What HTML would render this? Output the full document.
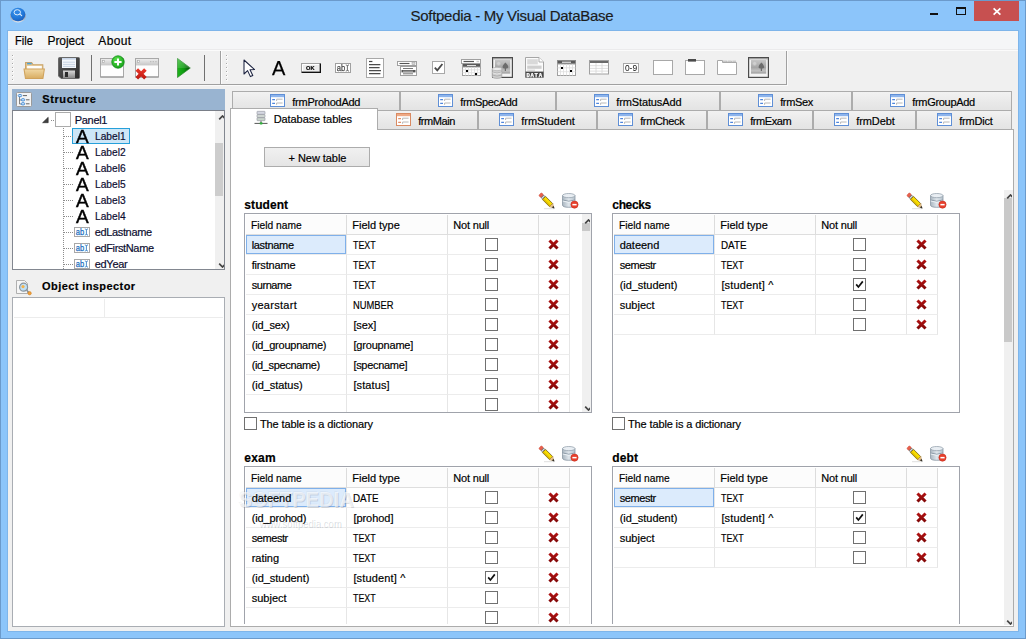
<!DOCTYPE html>
<html lang="en">
<head>
<meta charset="utf-8">
<title>Softpedia - My Visual DataBase</title>
<style>
html,body{margin:0;padding:0}
body{width:1026px;height:639px;overflow:hidden;position:relative;background:#8cc5fa;font-family:"Liberation Sans",sans-serif;font-size:11px;color:#000}
div,svg,span.t{position:absolute;box-sizing:border-box}
span.t{white-space:pre;display:block;z-index:1;-webkit-text-stroke:0.18px currentColor}
svg{overflow:visible}
.tab{border:1px solid #acacac;border-bottom:none;background:linear-gradient(#f2f2f2,#e8e8e8 60%,#e3e3e3)}
.panel{background:#fff;border:1px solid #a0a3ab}
.cell{border-right:1px solid #e6e6e6;border-bottom:1px solid #ececec}
.cb{width:13px;height:13px;background:#fff;border:1px solid #707070}

</style>
</head>
<body>
<div style="left:0px;top:0px;width:1026px;height:639px;border:1px solid #6b9acb;"></div>
<svg style="left:10px;top:7px" width="16" height="16" viewBox="0 0 16 16"><defs><radialGradient id="ga" cx="0.4" cy="0.3" r="0.85"><stop offset="0" stop-color="#3d98ee"/><stop offset="0.6" stop-color="#1f74d6"/><stop offset="1" stop-color="#1a4fa8"/></radialGradient>
<linearGradient id="gar" x1="0" y1="0" x2="0" y2="1"><stop offset="0" stop-color="#7f8ea6"/><stop offset="0.75" stop-color="#a8b2c0"/><stop offset="1" stop-color="#e6eaf0"/></linearGradient></defs>
<ellipse cx="8" cy="9" rx="7.9" ry="6.5" fill="url(#gar)"/>
<ellipse cx="8" cy="7.5" rx="7.3" ry="6.7" fill="url(#ga)"/>
<ellipse cx="7.3" cy="5.3" rx="3.2" ry="2.6" fill="#2f86e4" stroke="#e6f0fc" stroke-width="0.95"/><path d="M9.9 7.1 L11.7 8.7" stroke="#e6f0fc" stroke-width="1.1" stroke-linecap="round"/></svg>
<span class="t" style="left:410.5px;top:8px;font-size:15px;line-height:15px;height:15px;letter-spacing:-0.29px;color:#1c1c1c;">Softpedia - My Visual DataBase</span>
<div style="left:930px;top:13px;width:8px;height:2px;background:#111"></div>
<div style="left:956px;top:7px;width:10px;height:8px;border:1px solid #111;border-top-width:2px"></div>
<div style="left:974px;top:1px;width:45px;height:20px;background:#c75050"></div>
<svg style="left:993px;top:8px" width="8" height="7" viewBox="0 0 8 7"><path d="M0.6 0.3 L7.4 6.7 M7.4 0.3 L0.6 6.7" stroke="#fff" stroke-width="1.7"/></svg>
<div style="left:7px;top:30px;width:1012px;height:602px;background:#7eb5ea"></div>
<div style="left:8px;top:31px;width:1010px;height:600px;background:#f0f0f0"></div>
<div style="left:8px;top:31px;width:1010px;height:19px;background:#f5f6f7"></div>
<div style="left:8px;top:49px;width:1010px;height:1px;background:#ebebec"></div>
<div style="left:8px;top:50px;width:1010px;height:1px;background:#fbfbfb"></div>
<span class="t" style="left:15.3px;top:35px;font-size:12px;line-height:12px;height:12px;transform:scaleX(0.920);transform-origin:0 0;">File</span>
<span class="t" style="left:47.6px;top:35px;font-size:12px;line-height:12px;height:12px;letter-spacing:-0.13px;">Project</span>
<span class="t" style="left:98.3px;top:35px;font-size:12px;line-height:12px;height:12px;letter-spacing:0.34px;">About</span>
<div style="left:8px;top:84px;width:779px;height:1px;background:#a0a0a0"></div>
<div style="left:8px;top:85px;width:779px;height:1px;background:#fafafa"></div>
<div style="left:220px;top:51px;width:1px;height:33px;background:#a0a0a0"></div>
<div style="left:221px;top:51px;width:1px;height:33px;background:#fcfcfc"></div>
<div style="left:786px;top:51px;width:1px;height:34px;background:#a0a0a0"></div>
<div style="left:787px;top:51px;width:1px;height:35px;background:#fafafa"></div>
<div style="left:12px;top:55px;width:2px;height:2px;background:#fbfbfb"></div><div style="left:12px;top:55px;width:1px;height:1px;background:#a8a8a8"></div><div style="left:12px;top:59px;width:2px;height:2px;background:#fbfbfb"></div><div style="left:12px;top:59px;width:1px;height:1px;background:#a8a8a8"></div><div style="left:12px;top:63px;width:2px;height:2px;background:#fbfbfb"></div><div style="left:12px;top:63px;width:1px;height:1px;background:#a8a8a8"></div><div style="left:12px;top:67px;width:2px;height:2px;background:#fbfbfb"></div><div style="left:12px;top:67px;width:1px;height:1px;background:#a8a8a8"></div><div style="left:12px;top:71px;width:2px;height:2px;background:#fbfbfb"></div><div style="left:12px;top:71px;width:1px;height:1px;background:#a8a8a8"></div><div style="left:12px;top:75px;width:2px;height:2px;background:#fbfbfb"></div><div style="left:12px;top:75px;width:1px;height:1px;background:#a8a8a8"></div><div style="left:12px;top:79px;width:2px;height:2px;background:#fbfbfb"></div><div style="left:12px;top:79px;width:1px;height:1px;background:#a8a8a8"></div>
<div style="left:226px;top:55px;width:2px;height:2px;background:#fbfbfb"></div><div style="left:226px;top:55px;width:1px;height:1px;background:#a8a8a8"></div><div style="left:226px;top:59px;width:2px;height:2px;background:#fbfbfb"></div><div style="left:226px;top:59px;width:1px;height:1px;background:#a8a8a8"></div><div style="left:226px;top:63px;width:2px;height:2px;background:#fbfbfb"></div><div style="left:226px;top:63px;width:1px;height:1px;background:#a8a8a8"></div><div style="left:226px;top:67px;width:2px;height:2px;background:#fbfbfb"></div><div style="left:226px;top:67px;width:1px;height:1px;background:#a8a8a8"></div><div style="left:226px;top:71px;width:2px;height:2px;background:#fbfbfb"></div><div style="left:226px;top:71px;width:1px;height:1px;background:#a8a8a8"></div><div style="left:226px;top:75px;width:2px;height:2px;background:#fbfbfb"></div><div style="left:226px;top:75px;width:1px;height:1px;background:#a8a8a8"></div><div style="left:226px;top:79px;width:2px;height:2px;background:#fbfbfb"></div><div style="left:226px;top:79px;width:1px;height:1px;background:#a8a8a8"></div>
<svg style="left:22.8px;top:60.6px" width="22.4" height="19" viewBox="0 0 22 18" preserveAspectRatio="none"><defs><linearGradient id="gf" x1="0" y1="0" x2="0" y2="1"><stop offset="0" stop-color="#f1d9a6"/><stop offset="1" stop-color="#d9ad62"/></linearGradient></defs>
<path d="M2.5 3.5 L2.5 1.5 L8.5 1.5 L10 3.5 L19.5 3.5 L19.5 8 L2.5 8 Z" fill="#e6c489" stroke="#c9a46a" stroke-width="1"/>
<rect x="4" y="1.8" width="4.5" height="1.4" fill="#4aa0d8"/>
<rect x="4" y="4.6" width="14.5" height="3.2" fill="#fdfdfb"/>
<path d="M1 7.5 L21 7.5 L19.6 16.5 L2.4 16.5 Z" fill="url(#gf)" stroke="#cfa25c" stroke-width="1"/></svg>
<svg style="left:58px;top:57px" width="22" height="22" viewBox="0 0 22 22"><defs><linearGradient id="gfl" x1="0" y1="0" x2="1" y2="1"><stop offset="0" stop-color="#5b5b5b"/><stop offset="1" stop-color="#2b2b2b"/></linearGradient>
<linearGradient id="gfm" x1="0" y1="0" x2="0" y2="1"><stop offset="0" stop-color="#d8d8d8"/><stop offset="1" stop-color="#8a8a8a"/></linearGradient></defs>
<path d="M1.5 0.5 H20.5 Q21.5 0.5 21.5 1.5 V20.5 Q21.5 21.5 20.5 21.5 H3 L0.5 19 V1.5 Q0.5 0.5 1.5 0.5Z" fill="url(#gfl)" stroke="#6b6b6b" stroke-width="1"/>
<rect x="4" y="1" width="14" height="10" fill="#f4f7fb"/>
<rect x="4" y="1" width="14" height="1.6" fill="#c9d6e8"/>
<path d="M5 5.2H17 M5 7.4H17 M5 9.4H17" stroke="#c3cfe0" stroke-width="0.9"/>
<rect x="5" y="13.5" width="12" height="7.5" fill="url(#gfm)"/>
<rect x="7" y="15" width="3" height="5" fill="#2a2a2a"/></svg>
<div style="left:91px;top:55px;width:1px;height:26px;background:#707070"></div>
<svg style="left:100px;top:58px" width="24" height="20" viewBox="0 0 24 20"><defs><linearGradient id="gn" x1="0" y1="0" x2="0" y2="1"><stop offset="0" stop-color="#ececec"/><stop offset="1" stop-color="#c6c6c6"/></linearGradient></defs>
<rect x="0.5" y="0.5" width="23" height="18.5" fill="#fdfdfd" stroke="#a8a8a8" stroke-width="1"/>
<path d="M0.5 19H23.5" stroke="#8e8e8e" stroke-width="1"/>
<rect x="1" y="1" width="22" height="6.4" fill="url(#gn)"/>
<rect x="2.6" y="2.4" width="2" height="2" fill="#f6f6f6" stroke="#a6a6a6" stroke-width="0.6"/><defs><radialGradient id="gp" cx="0.4" cy="0.3" r="0.8"><stop offset="0" stop-color="#58e04a"/><stop offset="1" stop-color="#109a14"/></radialGradient></defs>
<circle cx="18" cy="4" r="6.2" fill="url(#gp)" stroke="#0c8a12" stroke-width="0.8"/>
<path d="M18 0.4V7.6 M14.4 4H21.6" stroke="#fff" stroke-width="2"/></svg>
<svg style="left:135px;top:58px" width="24" height="22" viewBox="0 0 24 22"><defs><linearGradient id="gd" x1="0" y1="0" x2="0" y2="1"><stop offset="0" stop-color="#ececec"/><stop offset="1" stop-color="#c6c6c6"/></linearGradient></defs>
<rect x="0.5" y="0.5" width="23" height="18.5" fill="#fdfdfd" stroke="#a8a8a8" stroke-width="1"/>
<path d="M0.5 19H23.5" stroke="#8e8e8e" stroke-width="1"/>
<rect x="1" y="1" width="22" height="6.4" fill="url(#gd)"/>
<rect x="2.6" y="2.4" width="2" height="2" fill="#f6f6f6" stroke="#a6a6a6" stroke-width="0.6"/><path d="M15 3.6h1.4 M17.6 3.6h1.4 M20.2 3.6h1.4" stroke="#bdbdbd" stroke-width="1.2"/>
<defs><linearGradient id="gdx" x1="0" y1="10" x2="0" y2="22" gradientUnits="userSpaceOnUse"><stop offset="0" stop-color="#ee3a2c"/><stop offset="1" stop-color="#b8140e"/></linearGradient></defs>
<path d="M1.8 11.6 L10.4 20.2 M10.4 11.6 L1.8 20.2" stroke="url(#gdx)" stroke-width="3.6" stroke-linecap="butt"/></svg>
<svg style="left:176.5px;top:58px" width="14" height="20" viewBox="0 0 14 20"><defs><linearGradient id="gpl" x1="0" y1="0" x2="1" y2="0"><stop offset="0" stop-color="#1fb41c"/><stop offset="0.5" stop-color="#0d9a10"/><stop offset="1" stop-color="#044208"/></linearGradient>
<linearGradient id="gpl2" x1="0" y1="0" x2="0" y2="1"><stop offset="0" stop-color="#fff" stop-opacity="0.28"/><stop offset="0.5" stop-color="#fff" stop-opacity="0.12"/><stop offset="0.5" stop-color="#fff" stop-opacity="0"/></linearGradient></defs>
<path d="M0.5 0.5 L13.3 10 L0.5 19.5 Z" fill="url(#gpl)" stroke="#2a8a2a" stroke-width="0.7"/>
<path d="M0.5 0.5 L13.3 10 L0.5 19.5 Z" fill="url(#gpl2)"/></svg>
<div style="left:204px;top:55px;width:1px;height:26px;background:#707070"></div>
<svg style="left:242.5px;top:59px" width="13" height="19" viewBox="0 0 13 19"><path d="M1 1 L1 15 L4.6 11.6 L7.4 17.6 L9.8 16.5 L7 10.8 L11.6 10.6 Z" fill="#fff" stroke="#1c2340" stroke-width="1.05" stroke-linejoin="round"/></svg>
<span class="t" style="left:272.4px;top:58px;font-size:20px;line-height:20px;height:20px;-webkit-text-stroke:0.25px #000;will-change:transform;">A</span>
<svg style="will-change:transform;left:301px;top:63px" width="20" height="10" viewBox="0 0 20 10"><rect x="0.5" y="0.5" width="18.5" height="8.5" fill="#ececec" stroke="#a0a0a0" stroke-width="1"/>
<path d="M1.5 8V1.5H18" stroke="#fff" stroke-width="1" fill="none"/>
<path d="M0.6 9.4H19.4V0.4" stroke="#111" stroke-width="1.2" fill="none"/>
<text x="9.4" y="6.9" font-family="Liberation Sans, sans-serif" font-size="5.6" font-weight="bold" text-anchor="middle" fill="#000" stroke="#000" stroke-width="0.2" letter-spacing="0.3">OK</text></svg>
<svg style="will-change:transform;left:335px;top:63px" width="16" height="10" viewBox="0 0 16 10"><rect x="0.5" y="0.5" width="15" height="9" fill="#fff" stroke="#a0a0a0" stroke-width="1"/>
<text x="1.8" y="8" font-family="Liberation Sans, sans-serif" font-size="8.6" fill="#4a4a4a" stroke="#4a4a4a" stroke-width="0.25" textLength="8.4" lengthAdjust="spacingAndGlyphs">ab</text>
<path d="M10.8 1.9 q1.1 0 1.6 .9 q.5 -.9 1.6 -.9 M12.4 2.6 V7.4 M10.8 8.1 q1.1 0 1.6 -.9 q.5 .9 1.6 .9" stroke="#4a4a4a" stroke-width="0.8" fill="none"/></svg>
<svg style="left:366px;top:58px" width="18" height="20" viewBox="0 0 18 20"><rect x="0.5" y="0.5" width="17" height="19" fill="#fff" stroke="#a8a8a8" stroke-width="1"/>
<path d="M3 3.5H6.4" stroke="#444" stroke-width="1.2"/>
<path d="M3 6.6H14.4 M3 9.6H13.6 M3 12.6H15 M3 15.6H14.4" stroke="#4c4c4c" stroke-width="1.2"/></svg>
<svg style="left:397px;top:61px" width="20" height="15" viewBox="0 0 20 15"><rect x="0.5" y="0.5" width="19" height="4" fill="#fff" stroke="#a0a0a0" stroke-width="1"/>
<path d="M2.5 2.5H12.5" stroke="#555" stroke-width="1.1"/><rect x="15" y="1.6" width="3" height="1.8" fill="#d8d8d8" stroke="#999" stroke-width="0.5"/>
<rect x="3.5" y="5.5" width="16" height="9" fill="#fff" stroke="#a0a0a0" stroke-width="1"/>
<path d="M6 7.5H16" stroke="#777" stroke-width="1"/>
<rect x="4.5" y="9" width="14" height="2.4" fill="#555"/><path d="M6 10.2H16" stroke="#ddd" stroke-width="0.7"/>
<path d="M6 12.8H16" stroke="#777" stroke-width="1"/></svg>
<svg style="left:432px;top:61px" width="13" height="13" viewBox="0 0 13 13"><rect x="0.5" y="0.5" width="12" height="12" fill="#fff" stroke="#a8a8a8" stroke-width="1"/>
<path d="M2.8 6.6 L5.3 9.4 L10.4 3" stroke="#4a4a4a" stroke-width="1.8" fill="none"/></svg>
<svg style="left:461px;top:59px" width="20" height="17" viewBox="0 0 20 17"><rect x="0.5" y="0.5" width="19" height="4" fill="#fff" stroke="#a0a0a0" stroke-width="1"/>
<path d="M2.5 2.5H13" stroke="#555" stroke-width="1.2"/><rect x="15.5" y="1.8" width="2.6" height="1.4" fill="#ccc"/>
<rect x="1.5" y="5" width="18" height="3" fill="#5a5a5a"/><path d="M6 6.5H15" stroke="#eee" stroke-width="0.9"/><rect x="1.5" y="8" width="18" height="8.5" fill="#fff" stroke="#a0a0a0" stroke-width="1"/><path d="M4.5 8V16.5" stroke="#ddd" stroke-width="0.8"/><path d="M7.5 8V16.5" stroke="#ddd" stroke-width="0.8"/><path d="M10.5 8V16.5" stroke="#ddd" stroke-width="0.8"/><path d="M13.5 8V16.5" stroke="#ddd" stroke-width="0.8"/><path d="M16.5 8V16.5" stroke="#ddd" stroke-width="0.8"/><path d="M1.5 10.8H19.5" stroke="#ddd" stroke-width="0.8"/><path d="M1.5 13.7H19.5" stroke="#ddd" stroke-width="0.8"/><rect x="5" y="11" width="2" height="2" fill="#000"/><rect x="14" y="14" width="2" height="2" fill="#000"/></svg>
<svg style="left:492px;top:57px" width="21" height="22" viewBox="0 0 21 22"><defs><linearGradient id="gi1" x1="0" y1="0" x2="0" y2="1"><stop offset="0" stop-color="#c6c6c6"/><stop offset="0.55" stop-color="#a6a6a6"/><stop offset="0.8" stop-color="#c2c2c2"/><stop offset="1" stop-color="#9c9c9c"/></linearGradient></defs>
<rect x="0.6" y="0.6" width="19.8" height="19.8" fill="#f4f4f4" stroke="#4c4c4c" stroke-width="1.2"/>
<path d="M1.2 1.8H19.8" stroke="#8a8a8a" stroke-width="1"/>
<rect x="3" y="3" width="15.2" height="13.6" fill="url(#gi1)"/>
<circle cx="6.6" cy="6.4" r="2" fill="#cfcfcf" stroke="#bcbcbc" stroke-width="0.6"/>
<path d="M13.4 5.6 Q16.6 8.6 16.2 10.4 Q15.6 11.6 14 11.4 V14 H12.8 V11.4 Q11.2 11.6 10.6 10.4 Q10.2 8.6 13.4 5.6Z" fill="#6c6c6c"/><g><path d="M0.2 12 V19.4 Q0.2 21.4 5 21.4 Q9.8 21.4 9.8 19.4 V12Z" fill="#cfcfcf" stroke="#a4a4a4" stroke-width="0.7"/>
<ellipse cx="5" cy="12" rx="4.8" ry="1.7" fill="#ececec" stroke="#b0b0b0" stroke-width="0.7"/>
<path d="M0.2 15 Q5 17.4 9.8 15 M0.2 18 Q5 20.2 9.8 18" stroke="#a8a8a8" stroke-width="0.8" fill="none"/><path d="M0.5 15.8 Q5 18.2 9.5 15.8" stroke="#efefef" stroke-width="0.7" fill="none"/></g></svg>
<svg style="will-change:transform;left:525px;top:57px" width="19" height="21" viewBox="0 0 19 21"><path d="M0.5 0.5 H14 L18.5 5 V20.5 H0.5 Z" fill="#fbfbfb" stroke="#a6a6a6" stroke-width="1"/>
<path d="M14 0.5 V5 H18.5" fill="#fff" stroke="#a6a6a6" stroke-width="0.9"/>
<rect x="2.2" y="2.2" width="10.6" height="5.2" fill="#d9d9d9"/><rect x="2.2" y="8.6" width="14.4" height="3.2" fill="#cfcfcf"/><path d="M2.2 13.2H10" stroke="#c4c4c4" stroke-width="0.8"/>
<rect x="0.5" y="14.6" width="18" height="5.9" fill="#484848"/>
<text x="9.6" y="19.5" font-family="Liberation Mono, monospace" font-size="5.6" font-weight="bold" text-anchor="middle" fill="#fff" stroke="#fff" stroke-width="0.25" letter-spacing="0.7">DATA</text></svg>
<svg style="left:557px;top:60px" width="19" height="16" viewBox="0 0 19 16"><rect x="0.5" y="0.5" width="18" height="3.5" fill="#5a5a5a" stroke="#8a8a8a" stroke-width="1"/><path d="M5 2.2H14" stroke="#fff" stroke-width="1"/><rect x="0.5" y="4" width="18" height="11.5" fill="#fff" stroke="#a0a0a0" stroke-width="1"/><path d="M3.5 4V15.5" stroke="#ddd" stroke-width="0.8"/><path d="M6.5 4V15.5" stroke="#ddd" stroke-width="0.8"/><path d="M9.5 4V15.5" stroke="#ddd" stroke-width="0.8"/><path d="M12.5 4V15.5" stroke="#ddd" stroke-width="0.8"/><path d="M15.5 4V15.5" stroke="#ddd" stroke-width="0.8"/><path d="M0.5 7.8H18.5" stroke="#ddd" stroke-width="0.8"/><path d="M0.5 11.7H18.5" stroke="#ddd" stroke-width="0.8"/><rect x="4" y="7" width="2" height="2" fill="#000"/><rect x="13" y="10" width="2" height="2" fill="#000"/></svg>
<svg style="left:589px;top:60px" width="20" height="15" viewBox="0 0 20 15"><rect x="0.5" y="0.5" width="19" height="13.5" fill="#fff" stroke="#a0a0a0" stroke-width="1"/>
<rect x="1" y="1" width="18" height="2" fill="#6a6a6a"/>
<path d="M1 5.7H19 M1 8.4H19 M1 11.1H19 M7 3V14 M13 3V14" stroke="#d6d6d6" stroke-width="0.8"/></svg>
<svg style="will-change:transform;left:623px;top:63px" width="16" height="10" viewBox="0 0 16 10"><rect x="0.5" y="0.5" width="15" height="9" fill="#fff" stroke="#a8a8a8" stroke-width="1"/>
<text x="8" y="8.1" font-family="Liberation Sans, sans-serif" font-size="8.4" text-anchor="middle" fill="#111">0-9</text></svg>
<svg style="left:653px;top:60px" width="20" height="15" viewBox="0 0 20 15"><rect x="0.5" y="0.5" width="19" height="14" fill="#fff" stroke="#a8a8a8" stroke-width="1"/></svg>
<svg style="left:685px;top:59px" width="20" height="17" viewBox="0 0 20 17"><rect x="0.5" y="1.5" width="19" height="14" fill="#fff" stroke="#a8a8a8" stroke-width="1"/><rect x="3" y="0" width="8" height="2.6" fill="#4a4a4a"/></svg>
<svg style="left:717px;top:60px" width="20" height="15" viewBox="0 0 20 15"><path d="M0.5 0.5 H5.5 V2.5 H19.5 V14.5 H0.5 Z" fill="#fff" stroke="#a8a8a8" stroke-width="1"/>
<path d="M6 1.2H10 V2.5 M10.8 1.2H14.6 V2.5 M15.4 1.2H19 " stroke="#b0b0b0" stroke-width="0.9" fill="none"/></svg>
<svg style="left:748px;top:57px" width="21" height="22" viewBox="0 0 21 22"><defs><linearGradient id="gi2" x1="0" y1="0" x2="0" y2="1"><stop offset="0" stop-color="#c6c6c6"/><stop offset="0.55" stop-color="#a6a6a6"/><stop offset="0.8" stop-color="#c2c2c2"/><stop offset="1" stop-color="#9c9c9c"/></linearGradient></defs>
<rect x="0.6" y="0.6" width="19.8" height="19.8" fill="#f4f4f4" stroke="#4c4c4c" stroke-width="1.2"/>
<path d="M1.2 1.8H19.8" stroke="#8a8a8a" stroke-width="1"/>
<rect x="3" y="3" width="15.2" height="13.6" fill="url(#gi2)"/>
<circle cx="6.6" cy="6.4" r="2" fill="#cfcfcf" stroke="#bcbcbc" stroke-width="0.6"/>
<path d="M13.4 5.6 Q16.6 8.6 16.2 10.4 Q15.6 11.6 14 11.4 V14 H12.8 V11.4 Q11.2 11.6 10.6 10.4 Q10.2 8.6 13.4 5.6Z" fill="#6c6c6c"/></svg>
<div style="left:12px;top:89px;width:213px;height:22px;background:#99b4d1"></div>
<svg style="left:16px;top:92px" width="16" height="15" viewBox="0 0 16 15"><rect x="0.5" y="0.5" width="15" height="14" rx="1" fill="#f4f4f4" stroke="#9a9a9a" stroke-width="1"/>
<path d="M3.5 4 V12 M3.5 8H6 M3.5 12H6" stroke="#6a6a6a" stroke-width="0.8" fill="none"/>
<ellipse cx="4" cy="3.6" rx="1.8" ry="1.2" fill="#cfe4fb" stroke="#2f7fd0" stroke-width="0.8"/>
<ellipse cx="7" cy="7.8" rx="1.8" ry="1.2" fill="#cfe4fb" stroke="#2f7fd0" stroke-width="0.8"/>
<ellipse cx="7" cy="11.8" rx="1.8" ry="1.2" fill="#cfe4fb" stroke="#2f7fd0" stroke-width="0.8"/>
<path d="M7 3.6H11 M10 7.8H13.5 M10 11.8H13.5" stroke="#555" stroke-width="0.9"/></svg>
<span class="t" style="left:42.2px;top:94px;font-size:11px;line-height:11px;height:11px;letter-spacing:0.61px;font-weight:bold;">Structure</span>
<div style="left:12px;top:110px;width:213px;height:160px;background:#fff;border:1px solid #828790;border-top-color:#7a7f88"></div>
<div style="left:215px;top:111px;width:9px;height:158px;background:#f0f0f0"></div>
<div style="left:215px;top:143px;width:8px;height:53px;background:#cdcdcd"></div>
<svg style="left:215.5px;top:115px;overflow:hidden" width="8" height="5" viewBox="0 0 8 5"><path d="M3.2 4.4 L6.5 1 L9.8 4.4" stroke="#444" stroke-width="1.7" fill="none"/></svg>
<svg style="left:215.5px;top:263px;overflow:hidden" width="8" height="5" viewBox="0 0 8 5"><path d="M3.2 0.6 L6.5 4 L9.8 0.6" stroke="#444" stroke-width="1.7" fill="none"/></svg>
<svg style="left:42px;top:117px" width="7" height="6" viewBox="0 0 7 6"><path d="M6.2 0.3 V5.7 H0.6 Z" fill="#404040" stroke="#262626" stroke-width="0.6"/></svg>
<div style="left:51px;top:120px;width:4px;height:1px;background-image:linear-gradient(90deg,#8c8c8c 50%,transparent 50%);background-size:2px 1px"></div>
<div style="left:55px;top:112px;width:16px;height:15px;background:#fff;border:1px solid #ababab"></div>
<span class="t" style="left:74.8px;top:115px;font-size:11px;line-height:11px;height:11px;letter-spacing:-0.33px;color:#0c0c30;">Panel1</span>
<div style="left:63px;top:128px;width:1px;height:141px;background-image:linear-gradient(180deg,#8c8c8c 50%,transparent 50%);background-size:1px 2px"></div>
<div style="left:72px;top:128px;width:58px;height:16px;background:#cde6f7;border:1px solid #26a0da"></div>
<div style="left:64px;top:136px;width:9px;height:1px;background-image:linear-gradient(90deg,#8c8c8c 50%,transparent 50%);background-size:2px 1px"></div>
<span class="t" style="left:75.6px;top:127px;font-size:19px;line-height:19px;height:19px;-webkit-text-stroke:0.45px #000;will-change:transform;">A</span>
<span class="t" style="left:94.6px;top:131px;font-size:11px;line-height:11px;height:11px;transform:scaleX(0.926);transform-origin:0 0;color:#0c0c30;">Label1</span>
<div style="left:64px;top:152px;width:9px;height:1px;background-image:linear-gradient(90deg,#8c8c8c 50%,transparent 50%);background-size:2px 1px"></div>
<span class="t" style="left:75.6px;top:143px;font-size:19px;line-height:19px;height:19px;-webkit-text-stroke:0.45px #000;will-change:transform;">A</span>
<span class="t" style="left:94.6px;top:147px;font-size:11px;line-height:11px;height:11px;transform:scaleX(0.926);transform-origin:0 0;color:#0c0c30;">Label2</span>
<div style="left:64px;top:168px;width:9px;height:1px;background-image:linear-gradient(90deg,#8c8c8c 50%,transparent 50%);background-size:2px 1px"></div>
<span class="t" style="left:75.6px;top:159px;font-size:19px;line-height:19px;height:19px;-webkit-text-stroke:0.45px #000;will-change:transform;">A</span>
<span class="t" style="left:94.6px;top:163px;font-size:11px;line-height:11px;height:11px;transform:scaleX(0.926);transform-origin:0 0;color:#0c0c30;">Label6</span>
<div style="left:64px;top:184px;width:9px;height:1px;background-image:linear-gradient(90deg,#8c8c8c 50%,transparent 50%);background-size:2px 1px"></div>
<span class="t" style="left:75.6px;top:175px;font-size:19px;line-height:19px;height:19px;-webkit-text-stroke:0.45px #000;will-change:transform;">A</span>
<span class="t" style="left:94.6px;top:179px;font-size:11px;line-height:11px;height:11px;transform:scaleX(0.926);transform-origin:0 0;color:#0c0c30;">Label5</span>
<div style="left:64px;top:200px;width:9px;height:1px;background-image:linear-gradient(90deg,#8c8c8c 50%,transparent 50%);background-size:2px 1px"></div>
<span class="t" style="left:75.6px;top:191px;font-size:19px;line-height:19px;height:19px;-webkit-text-stroke:0.45px #000;will-change:transform;">A</span>
<span class="t" style="left:94.6px;top:195px;font-size:11px;line-height:11px;height:11px;transform:scaleX(0.926);transform-origin:0 0;color:#0c0c30;">Label3</span>
<div style="left:64px;top:216px;width:9px;height:1px;background-image:linear-gradient(90deg,#8c8c8c 50%,transparent 50%);background-size:2px 1px"></div>
<span class="t" style="left:75.6px;top:207px;font-size:19px;line-height:19px;height:19px;-webkit-text-stroke:0.45px #000;will-change:transform;">A</span>
<span class="t" style="left:94.6px;top:211px;font-size:11px;line-height:11px;height:11px;transform:scaleX(0.926);transform-origin:0 0;color:#0c0c30;">Label4</span>
<div style="left:64px;top:232px;width:10px;height:1px;background-image:linear-gradient(90deg,#8c8c8c 50%,transparent 50%);background-size:2px 1px"></div>
<svg style="left:74px;top:227px" width="16" height="10" viewBox="0 0 16 10"><rect x="0.5" y="0.5" width="15" height="9" fill="#fff" stroke="#a8a8a8" stroke-width="1"/>
<text x="1.8" y="8" font-family="Liberation Sans, sans-serif" font-size="8.6" fill="#1f6fc0" stroke="#1f6fc0" stroke-width="0.25" textLength="8.4" lengthAdjust="spacingAndGlyphs">ab</text>
<path d="M10.8 1.9 q1.1 0 1.6 .9 q.5 -.9 1.6 -.9 M12.4 2.6 V7.4 M10.8 8.1 q1.1 0 1.6 -.9 q.5 .9 1.6 .9" stroke="#1f6fc0" stroke-width="0.8" fill="none"/></svg>
<span class="t" style="left:94.7px;top:227px;font-size:11px;line-height:11px;height:11px;letter-spacing:-0.35px;color:#0c0c30;">edLastname</span>
<div style="left:64px;top:248px;width:10px;height:1px;background-image:linear-gradient(90deg,#8c8c8c 50%,transparent 50%);background-size:2px 1px"></div>
<svg style="left:74px;top:243px" width="16" height="10" viewBox="0 0 16 10"><rect x="0.5" y="0.5" width="15" height="9" fill="#fff" stroke="#a8a8a8" stroke-width="1"/>
<text x="1.8" y="8" font-family="Liberation Sans, sans-serif" font-size="8.6" fill="#1f6fc0" stroke="#1f6fc0" stroke-width="0.25" textLength="8.4" lengthAdjust="spacingAndGlyphs">ab</text>
<path d="M10.8 1.9 q1.1 0 1.6 .9 q.5 -.9 1.6 -.9 M12.4 2.6 V7.4 M10.8 8.1 q1.1 0 1.6 -.9 q.5 .9 1.6 .9" stroke="#1f6fc0" stroke-width="0.8" fill="none"/></svg>
<span class="t" style="left:94.7px;top:243px;font-size:11px;line-height:11px;height:11px;letter-spacing:-0.36px;color:#0c0c30;">edFirstName</span>
<div style="left:64px;top:264px;width:10px;height:1px;background-image:linear-gradient(90deg,#8c8c8c 50%,transparent 50%);background-size:2px 1px"></div>
<svg style="left:74px;top:259px" width="16" height="10" viewBox="0 0 16 10"><rect x="0.5" y="0.5" width="15" height="9" fill="#fff" stroke="#a8a8a8" stroke-width="1"/>
<text x="1.8" y="8" font-family="Liberation Sans, sans-serif" font-size="8.6" fill="#1f6fc0" stroke="#1f6fc0" stroke-width="0.25" textLength="8.4" lengthAdjust="spacingAndGlyphs">ab</text>
<path d="M10.8 1.9 q1.1 0 1.6 .9 q.5 -.9 1.6 -.9 M12.4 2.6 V7.4 M10.8 8.1 q1.1 0 1.6 -.9 q.5 .9 1.6 .9" stroke="#1f6fc0" stroke-width="0.8" fill="none"/></svg>
<span class="t" style="left:94.7px;top:259px;font-size:11px;line-height:11px;height:11px;letter-spacing:-0.29px;color:#0c0c30;">edYear</span>
<div style="left:12px;top:269px;width:213px;height:1px;background:#828790"></div>
<div style="left:12px;top:270px;width:213px;height:5px;background:#f0f0f0"></div>
<svg style="left:16px;top:279.5px" width="16" height="16" viewBox="0 0 16 16"><path d="M0.5 0.5 H8.5 L11.5 3.5 V13.5 H0.5Z" fill="#f6f6f6" stroke="#a8a8a8" stroke-width="0.9"/>
<circle cx="7.6" cy="7.2" r="4" fill="#bfe0f6" stroke="#8a949c" stroke-width="1.2"/>
<circle cx="7" cy="6.6" r="1.6" fill="#f6b24a"/>
<path d="M10.6 10.2 L13.2 12.8" stroke="#8a949c" stroke-width="1.6"/><circle cx="13.6" cy="13.2" r="1.7" fill="#f2a03a" stroke="#c87a1c" stroke-width="0.5"/></svg>
<span class="t" style="left:42.1px;top:281px;font-size:11px;line-height:11px;height:11px;letter-spacing:0.41px;font-weight:bold;">Object inspector</span>
<div style="left:12px;top:297px;width:213px;height:330px;background:#fff;border:1px solid #a9adb3"></div>
<div style="left:104px;top:299px;width:1px;height:18px;background:#ececec"></div>
<div style="left:14px;top:317px;width:209px;height:1px;background:#ececec"></div>
<div class="tab" style="left:232px;top:91px;width:168px;height:20px;"></div><svg style="left:270px;top:94px" width="15" height="13" viewBox="0 0 15 13"><rect x="0.5" y="0.5" width="14" height="12" fill="#fff" stroke="#5f8fd6" stroke-width="1"/>
<rect x="1" y="1" width="13" height="2.2" fill="#8db4ec"/>
<path d="M2.2 5.6H5 M2.2 9.4H5" stroke="#4f86dc" stroke-width="1.1"/>
<path d="M6.6 7 V5.2 H12.6 M6.6 10.8 V9 H12.6" stroke="#b8b8b8" stroke-width="1" fill="none"/></svg><span class="t" style="left:292.3px;top:97px;font-size:11px;line-height:11px;height:11px;letter-spacing:-0.25px;">frmProhodAdd</span>
<div class="tab" style="left:400px;top:91px;width:156px;height:20px;"></div><svg style="left:438px;top:94px" width="15" height="13" viewBox="0 0 15 13"><rect x="0.5" y="0.5" width="14" height="12" fill="#fff" stroke="#5f8fd6" stroke-width="1"/>
<rect x="1" y="1" width="13" height="2.2" fill="#8db4ec"/>
<path d="M2.2 5.6H5 M2.2 9.4H5" stroke="#4f86dc" stroke-width="1.1"/>
<path d="M6.6 7 V5.2 H12.6 M6.6 10.8 V9 H12.6" stroke="#b8b8b8" stroke-width="1" fill="none"/></svg><span class="t" style="left:460.2px;top:97px;font-size:11px;line-height:11px;height:11px;letter-spacing:-0.35px;">frmSpecAdd</span>
<div class="tab" style="left:556px;top:91px;width:164px;height:20px;"></div><svg style="left:594px;top:94px" width="15" height="13" viewBox="0 0 15 13"><rect x="0.5" y="0.5" width="14" height="12" fill="#fff" stroke="#5f8fd6" stroke-width="1"/>
<rect x="1" y="1" width="13" height="2.2" fill="#8db4ec"/>
<path d="M2.2 5.6H5 M2.2 9.4H5" stroke="#4f86dc" stroke-width="1.1"/>
<path d="M6.6 7 V5.2 H12.6 M6.6 10.8 V9 H12.6" stroke="#b8b8b8" stroke-width="1" fill="none"/></svg><span class="t" style="left:616.2px;top:97px;font-size:11px;line-height:11px;height:11px;letter-spacing:-0.11px;">frmStatusAdd</span>
<div class="tab" style="left:720px;top:91px;width:132px;height:20px;"></div><svg style="left:758px;top:94px" width="15" height="13" viewBox="0 0 15 13"><rect x="0.5" y="0.5" width="14" height="12" fill="#fff" stroke="#5f8fd6" stroke-width="1"/>
<rect x="1" y="1" width="13" height="2.2" fill="#8db4ec"/>
<path d="M2.2 5.6H5 M2.2 9.4H5" stroke="#4f86dc" stroke-width="1.1"/>
<path d="M6.6 7 V5.2 H12.6 M6.6 10.8 V9 H12.6" stroke="#b8b8b8" stroke-width="1" fill="none"/></svg><span class="t" style="left:780.2px;top:97px;font-size:11px;line-height:11px;height:11px;letter-spacing:-0.37px;">frmSex</span>
<div class="tab" style="left:852px;top:91px;width:160px;height:20px;"></div><svg style="left:890px;top:94px" width="15" height="13" viewBox="0 0 15 13"><rect x="0.5" y="0.5" width="14" height="12" fill="#fff" stroke="#5f8fd6" stroke-width="1"/>
<rect x="1" y="1" width="13" height="2.2" fill="#8db4ec"/>
<path d="M2.2 5.6H5 M2.2 9.4H5" stroke="#4f86dc" stroke-width="1.1"/>
<path d="M6.6 7 V5.2 H12.6 M6.6 10.8 V9 H12.6" stroke="#b8b8b8" stroke-width="1" fill="none"/></svg><span class="t" style="left:912.2px;top:97px;font-size:11px;line-height:11px;height:11px;letter-spacing:-0.30px;">frmGroupAdd</span>
<div class="tab" style="left:377px;top:110px;width:101px;height:20px;"></div><svg style="left:396px;top:113px" width="15" height="13" viewBox="0 0 15 13"><rect x="0.5" y="0.5" width="14" height="12" fill="#fff" stroke="#d98a62" stroke-width="1"/>
<rect x="1" y="1" width="13" height="2.2" fill="#eea985"/>
<path d="M2.2 5.6H5 M2.2 9.4H5" stroke="#e0906a" stroke-width="1.1"/>
<path d="M6.6 7 V5.2 H12.6 M6.6 10.8 V9 H12.6" stroke="#b8b8b8" stroke-width="1" fill="none"/></svg><span class="t" style="left:418.2px;top:116px;font-size:11px;line-height:11px;height:11px;letter-spacing:-0.41px;">frmMain</span>
<div class="tab" style="left:478px;top:110px;width:119px;height:20px;"></div><svg style="left:499px;top:113px" width="15" height="13" viewBox="0 0 15 13"><rect x="0.5" y="0.5" width="14" height="12" fill="#fff" stroke="#5f8fd6" stroke-width="1"/>
<rect x="1" y="1" width="13" height="2.2" fill="#8db4ec"/>
<path d="M2.2 5.6H5 M2.2 9.4H5" stroke="#4f86dc" stroke-width="1.1"/>
<path d="M6.6 7 V5.2 H12.6 M6.6 10.8 V9 H12.6" stroke="#b8b8b8" stroke-width="1" fill="none"/></svg><span class="t" style="left:521.2px;top:116px;font-size:11px;line-height:11px;height:11px;letter-spacing:-0.01px;">frmStudent</span>
<div class="tab" style="left:597px;top:110px;width:110px;height:20px;"></div><svg style="left:618px;top:113px" width="15" height="13" viewBox="0 0 15 13"><rect x="0.5" y="0.5" width="14" height="12" fill="#fff" stroke="#5f8fd6" stroke-width="1"/>
<rect x="1" y="1" width="13" height="2.2" fill="#8db4ec"/>
<path d="M2.2 5.6H5 M2.2 9.4H5" stroke="#4f86dc" stroke-width="1.1"/>
<path d="M6.6 7 V5.2 H12.6 M6.6 10.8 V9 H12.6" stroke="#b8b8b8" stroke-width="1" fill="none"/></svg><span class="t" style="left:640.2px;top:116px;font-size:11px;line-height:11px;height:11px;letter-spacing:-0.37px;">frmCheck</span>
<div class="tab" style="left:707px;top:110px;width:106px;height:20px;"></div><svg style="left:728px;top:113px" width="15" height="13" viewBox="0 0 15 13"><rect x="0.5" y="0.5" width="14" height="12" fill="#fff" stroke="#5f8fd6" stroke-width="1"/>
<rect x="1" y="1" width="13" height="2.2" fill="#8db4ec"/>
<path d="M2.2 5.6H5 M2.2 9.4H5" stroke="#4f86dc" stroke-width="1.1"/>
<path d="M6.6 7 V5.2 H12.6 M6.6 10.8 V9 H12.6" stroke="#b8b8b8" stroke-width="1" fill="none"/></svg><span class="t" style="left:750.2px;top:116px;font-size:11px;line-height:11px;height:11px;letter-spacing:-0.42px;">frmExam</span>
<div class="tab" style="left:813px;top:110px;width:103px;height:20px;"></div><svg style="left:834px;top:113px" width="15" height="13" viewBox="0 0 15 13"><rect x="0.5" y="0.5" width="14" height="12" fill="#fff" stroke="#5f8fd6" stroke-width="1"/>
<rect x="1" y="1" width="13" height="2.2" fill="#8db4ec"/>
<path d="M2.2 5.6H5 M2.2 9.4H5" stroke="#4f86dc" stroke-width="1.1"/>
<path d="M6.6 7 V5.2 H12.6 M6.6 10.8 V9 H12.6" stroke="#b8b8b8" stroke-width="1" fill="none"/></svg><span class="t" style="left:856.2px;top:116px;font-size:11px;line-height:11px;height:11px;letter-spacing:-0.07px;">frmDebt</span>
<div class="tab" style="left:916px;top:110px;width:96px;height:20px;"></div><svg style="left:937px;top:113px" width="15" height="13" viewBox="0 0 15 13"><rect x="0.5" y="0.5" width="14" height="12" fill="#fff" stroke="#5f8fd6" stroke-width="1"/>
<rect x="1" y="1" width="13" height="2.2" fill="#8db4ec"/>
<path d="M2.2 5.6H5 M2.2 9.4H5" stroke="#4f86dc" stroke-width="1.1"/>
<path d="M6.6 7 V5.2 H12.6 M6.6 10.8 V9 H12.6" stroke="#b8b8b8" stroke-width="1" fill="none"/></svg><span class="t" style="left:959.2px;top:116px;font-size:11px;line-height:11px;height:11px;letter-spacing:-0.19px;">frmDict</span>
<div style="left:230px;top:129px;width:784px;height:498px;background:#fff;border:1px solid #acacac"></div>
<div style="left:230px;top:108px;width:148px;height:22px;background:#fff;border:1px solid #acacac;border-bottom:none"></div>
<svg style="left:254px;top:111px" width="14" height="14" viewBox="0 0 14 14"><rect x="3" y="0.3" width="8" height="3" rx="0.6" fill="#d5d8e2" stroke="#8e929c" stroke-width="0.6"/>
<rect x="3" y="3.5" width="8" height="3" rx="0.6" fill="#cfd6d2" stroke="#8e929c" stroke-width="0.6"/>
<rect x="3" y="6.7" width="8" height="3" rx="0.6" fill="#c9d4cc" stroke="#8e929c" stroke-width="0.6"/>
<path d="M7 9.8V12" stroke="#666" stroke-width="1"/>
<path d="M0.5 12.4H13.5" stroke="#555" stroke-width="1"/>
<rect x="5.6" y="11.2" width="3" height="2.4" rx="1" fill="#2fae3a"/></svg>
<span class="t" style="left:273.7px;top:114px;font-size:11px;line-height:11px;height:11px;letter-spacing:-0.08px;">Database tables</span>
<div style="left:264px;top:147px;width:106px;height:20px;border:1px solid #acacac;background:linear-gradient(#f0f0f0,#e5e5e5)"></div>
<span class="t" style="left:288.6px;top:153px;font-size:11px;line-height:11px;height:11px;letter-spacing:-0.06px;">+ New table</span>
<div style="left:1004px;top:190px;width:9px;height:435px;background:#f0f0f0"></div>
<div style="left:1004px;top:198px;width:8px;height:144px;background:#c9c9c9"></div>
<svg style="left:1004px;top:193.5px;overflow:hidden" width="8" height="5" viewBox="0 0 8 5"><path d="M3.2 4.4 L6.5 1 L9.8 4.4" stroke="#444" stroke-width="1.7" fill="none"/></svg>
<svg style="left:1004px;top:619.5px;overflow:hidden" width="8" height="5" viewBox="0 0 8 5"><path d="M3.2 0.6 L6.5 4 L9.8 0.6" stroke="#444" stroke-width="1.7" fill="none"/></svg>
<span class="t" style="left:244.3px;top:199px;font-size:12px;line-height:12px;height:12px;letter-spacing:0.08px;font-weight:bold;">student</span><svg style="left:539px;top:193px" width="16" height="16" viewBox="0 0 16 16"><path d="M5 15.7 H15.4" stroke="#dcdcdc" stroke-width="0.9"/>
<g transform="rotate(45 8 8)"><rect x="-1.9" y="6" width="3.2" height="4" rx="1.1" fill="#e8604c" stroke="#c84836" stroke-width="0.4"/>
<rect x="1.2" y="5.9" width="2.6" height="4.2" fill="#666"/><rect x="2" y="5.9" width="1" height="4.2" fill="#ececec"/>
<rect x="3.8" y="5.8" width="10" height="4.4" fill="#f7dc00" stroke="#7c6416" stroke-width="0.8"/>
<path d="M3.8 9.2H13.8" stroke="#d8b400" stroke-width="1"/>
<path d="M13.8 5.7 L17.6 8 L13.8 10.3Z" fill="#f1cc92" stroke="#a8824a" stroke-width="0.5"/><path d="M16.2 7.2 L18.2 8 L16.2 8.8Z" fill="#1c1c1c" stroke="#1c1c1c" stroke-width="0.4"/></g></svg><svg style="left:562px;top:192.5px" width="17" height="16" viewBox="0 0 17 16"><defs><linearGradient id="gdb" x1="0" y1="0" x2="1" y2="0"><stop offset="0" stop-color="#aab6c0"/><stop offset="0.5" stop-color="#dfe6ec"/><stop offset="1" stop-color="#b4c0ca"/></linearGradient></defs>
<path d="M0.5 2.5 V12 Q0.5 14.3 6.8 14.3 Q13 14.3 13 12 V2.5Z" fill="url(#gdb)" stroke="#8c98a4" stroke-width="0.8"/>
<ellipse cx="6.75" cy="2.6" rx="6.25" ry="2.1" fill="#e9eef3" stroke="#98a4b0" stroke-width="0.8"/>
<path d="M0.5 7 Q6.8 9.6 13 7" stroke="#8694a2" stroke-width="0.9" fill="none"/><path d="M0.8 8 Q6.8 10.6 12.8 8" stroke="#f2f6f9" stroke-width="0.9" fill="none"/>
<circle cx="12.5" cy="11.6" r="3.6" fill="#e8402c" stroke="#c42c1c" stroke-width="0.6"/><rect x="10.4" y="10.9" width="4.2" height="1.5" fill="#fff"/></svg><div class="panel" style="left:244px;top:213px;width:348px;height:200px;"></div><div style="left:246px;top:215px;width:101px;height:20px;background:#fcfcfc;border-right:1px solid #dcdcdc;border-bottom:1px solid #dedede"></div><div style="left:347px;top:215px;width:101px;height:20px;background:#fcfcfc;border-right:1px solid #dcdcdc;border-bottom:1px solid #dedede"></div><div style="left:448px;top:215px;width:91px;height:20px;background:#fcfcfc;border-right:1px solid #dcdcdc;border-bottom:1px solid #dedede"></div><div style="left:539px;top:215px;width:31px;height:20px;background:#fcfcfc;border-right:1px solid #dcdcdc;border-bottom:1px solid #dedede"></div><span class="t" style="left:251.3px;top:220px;font-size:11px;line-height:11px;height:11px;transform:scaleX(0.930);transform-origin:0 0;">Field name</span><span class="t" style="left:352.3px;top:220px;font-size:11px;line-height:11px;height:11px;letter-spacing:-0.02px;">Field type</span><span class="t" style="left:453.3px;top:220px;font-size:11px;line-height:11px;height:11px;letter-spacing:-0.19px;">Not null</span><div class="cell" style="left:246px;top:235px;width:101px;height:20px;"></div><div class="cell" style="left:347px;top:235px;width:101px;height:20px;"></div><div class="cell" style="left:448px;top:235px;width:91px;height:20px;"></div><div class="cell" style="left:539px;top:235px;width:31px;height:20px;"></div><div style="left:246px;top:235px;width:100px;height:19px;background:#dcebfc;border:1px solid #7fb0ea"></div><span class="t" style="left:251.7px;top:240px;font-size:11px;line-height:11px;height:11px;letter-spacing:-0.33px;">lastname</span><span class="t" style="left:352.8px;top:240px;font-size:11px;line-height:11px;height:11px;transform:scaleX(0.807);transform-origin:0 0;">TEXT</span><div class="cb" style="left:485px;top:238px;height:13px"></div><svg style="left:548.2px;top:239.2px" width="11" height="11" viewBox="0 0 11 11"><defs><linearGradient id="grx" x1="0" y1="0" x2="0" y2="11" gradientUnits="userSpaceOnUse"><stop offset="0" stop-color="#b81414"/><stop offset="1" stop-color="#7a0606"/></linearGradient></defs>
<path d="M1.45 1.45 L9.55 9.55 M9.55 1.45 L1.45 9.55" stroke="url(#grx)" stroke-width="3" stroke-linecap="butt"/></svg><div class="cell" style="left:246px;top:255px;width:101px;height:20px;"></div><div class="cell" style="left:347px;top:255px;width:101px;height:20px;"></div><div class="cell" style="left:448px;top:255px;width:91px;height:20px;"></div><div class="cell" style="left:539px;top:255px;width:31px;height:20px;"></div><span class="t" style="left:251.7px;top:260px;font-size:11px;line-height:11px;height:11px;letter-spacing:-0.16px;">firstname</span><span class="t" style="left:352.8px;top:260px;font-size:11px;line-height:11px;height:11px;transform:scaleX(0.807);transform-origin:0 0;">TEXT</span><div class="cb" style="left:485px;top:258px;height:13px"></div><svg style="left:548.2px;top:259.2px" width="11" height="11" viewBox="0 0 11 11"><defs><linearGradient id="grx" x1="0" y1="0" x2="0" y2="11" gradientUnits="userSpaceOnUse"><stop offset="0" stop-color="#b81414"/><stop offset="1" stop-color="#7a0606"/></linearGradient></defs>
<path d="M1.45 1.45 L9.55 9.55 M9.55 1.45 L1.45 9.55" stroke="url(#grx)" stroke-width="3" stroke-linecap="butt"/></svg><div class="cell" style="left:246px;top:275px;width:101px;height:20px;"></div><div class="cell" style="left:347px;top:275px;width:101px;height:20px;"></div><div class="cell" style="left:448px;top:275px;width:91px;height:20px;"></div><div class="cell" style="left:539px;top:275px;width:31px;height:20px;"></div><span class="t" style="left:251.7px;top:280px;font-size:11px;line-height:11px;height:11px;letter-spacing:-0.43px;">surname</span><span class="t" style="left:352.8px;top:280px;font-size:11px;line-height:11px;height:11px;transform:scaleX(0.807);transform-origin:0 0;">TEXT</span><div class="cb" style="left:485px;top:278px;height:13px"></div><svg style="left:548.2px;top:279.2px" width="11" height="11" viewBox="0 0 11 11"><defs><linearGradient id="grx" x1="0" y1="0" x2="0" y2="11" gradientUnits="userSpaceOnUse"><stop offset="0" stop-color="#b81414"/><stop offset="1" stop-color="#7a0606"/></linearGradient></defs>
<path d="M1.45 1.45 L9.55 9.55 M9.55 1.45 L1.45 9.55" stroke="url(#grx)" stroke-width="3" stroke-linecap="butt"/></svg><div class="cell" style="left:246px;top:295px;width:101px;height:20px;"></div><div class="cell" style="left:347px;top:295px;width:101px;height:20px;"></div><div class="cell" style="left:448px;top:295px;width:91px;height:20px;"></div><div class="cell" style="left:539px;top:295px;width:31px;height:20px;"></div><span class="t" style="left:251.7px;top:300px;font-size:11px;line-height:11px;height:11px;letter-spacing:0.28px;">yearstart</span><span class="t" style="left:352.8px;top:300px;font-size:11px;line-height:11px;height:11px;transform:scaleX(0.850);transform-origin:0 0;">NUMBER</span><div class="cb" style="left:485px;top:298px;height:13px"></div><svg style="left:548.2px;top:299.2px" width="11" height="11" viewBox="0 0 11 11"><defs><linearGradient id="grx" x1="0" y1="0" x2="0" y2="11" gradientUnits="userSpaceOnUse"><stop offset="0" stop-color="#b81414"/><stop offset="1" stop-color="#7a0606"/></linearGradient></defs>
<path d="M1.45 1.45 L9.55 9.55 M9.55 1.45 L1.45 9.55" stroke="url(#grx)" stroke-width="3" stroke-linecap="butt"/></svg><div class="cell" style="left:246px;top:315px;width:101px;height:20px;"></div><div class="cell" style="left:347px;top:315px;width:101px;height:20px;"></div><div class="cell" style="left:448px;top:315px;width:91px;height:20px;"></div><div class="cell" style="left:539px;top:315px;width:31px;height:20px;"></div><span class="t" style="left:251.7px;top:320px;font-size:11px;line-height:11px;height:11px;letter-spacing:-0.16px;">(id_sex)</span><span class="t" style="left:353.40000000000003px;top:320px;font-size:11px;line-height:11px;height:11px;letter-spacing:-0.08px;">[sex]</span><div class="cb" style="left:485px;top:318px;height:13px"></div><svg style="left:548.2px;top:319.2px" width="11" height="11" viewBox="0 0 11 11"><defs><linearGradient id="grx" x1="0" y1="0" x2="0" y2="11" gradientUnits="userSpaceOnUse"><stop offset="0" stop-color="#b81414"/><stop offset="1" stop-color="#7a0606"/></linearGradient></defs>
<path d="M1.45 1.45 L9.55 9.55 M9.55 1.45 L1.45 9.55" stroke="url(#grx)" stroke-width="3" stroke-linecap="butt"/></svg><div class="cell" style="left:246px;top:335px;width:101px;height:20px;"></div><div class="cell" style="left:347px;top:335px;width:101px;height:20px;"></div><div class="cell" style="left:448px;top:335px;width:91px;height:20px;"></div><div class="cell" style="left:539px;top:335px;width:31px;height:20px;"></div><span class="t" style="left:251.7px;top:340px;font-size:11px;line-height:11px;height:11px;letter-spacing:-0.22px;">(id_groupname)</span><span class="t" style="left:353.40000000000003px;top:340px;font-size:11px;line-height:11px;height:11px;letter-spacing:-0.18px;">[groupname]</span><div class="cb" style="left:485px;top:338px;height:13px"></div><svg style="left:548.2px;top:339.2px" width="11" height="11" viewBox="0 0 11 11"><defs><linearGradient id="grx" x1="0" y1="0" x2="0" y2="11" gradientUnits="userSpaceOnUse"><stop offset="0" stop-color="#b81414"/><stop offset="1" stop-color="#7a0606"/></linearGradient></defs>
<path d="M1.45 1.45 L9.55 9.55 M9.55 1.45 L1.45 9.55" stroke="url(#grx)" stroke-width="3" stroke-linecap="butt"/></svg><div class="cell" style="left:246px;top:355px;width:101px;height:20px;"></div><div class="cell" style="left:347px;top:355px;width:101px;height:20px;"></div><div class="cell" style="left:448px;top:355px;width:91px;height:20px;"></div><div class="cell" style="left:539px;top:355px;width:31px;height:20px;"></div><span class="t" style="left:251.7px;top:360px;font-size:11px;line-height:11px;height:11px;letter-spacing:-0.36px;">(id_specname)</span><span class="t" style="left:353.40000000000003px;top:360px;font-size:11px;line-height:11px;height:11px;letter-spacing:-0.30px;">[specname]</span><div class="cb" style="left:485px;top:358px;height:13px"></div><svg style="left:548.2px;top:359.2px" width="11" height="11" viewBox="0 0 11 11"><defs><linearGradient id="grx" x1="0" y1="0" x2="0" y2="11" gradientUnits="userSpaceOnUse"><stop offset="0" stop-color="#b81414"/><stop offset="1" stop-color="#7a0606"/></linearGradient></defs>
<path d="M1.45 1.45 L9.55 9.55 M9.55 1.45 L1.45 9.55" stroke="url(#grx)" stroke-width="3" stroke-linecap="butt"/></svg><div class="cell" style="left:246px;top:375px;width:101px;height:20px;"></div><div class="cell" style="left:347px;top:375px;width:101px;height:20px;"></div><div class="cell" style="left:448px;top:375px;width:91px;height:20px;"></div><div class="cell" style="left:539px;top:375px;width:31px;height:20px;"></div><span class="t" style="left:251.7px;top:380px;font-size:11px;line-height:11px;height:11px;letter-spacing:-0.05px;">(id_status)</span><span class="t" style="left:353.40000000000003px;top:380px;font-size:11px;line-height:11px;height:11px;letter-spacing:0.10px;">[status]</span><div class="cb" style="left:485px;top:378px;height:13px"></div><svg style="left:548.2px;top:379.2px" width="11" height="11" viewBox="0 0 11 11"><defs><linearGradient id="grx" x1="0" y1="0" x2="0" y2="11" gradientUnits="userSpaceOnUse"><stop offset="0" stop-color="#b81414"/><stop offset="1" stop-color="#7a0606"/></linearGradient></defs>
<path d="M1.45 1.45 L9.55 9.55 M9.55 1.45 L1.45 9.55" stroke="url(#grx)" stroke-width="3" stroke-linecap="butt"/></svg><div class="cell" style="left:246px;top:395px;width:101px;height:17px;border-bottom:none"></div><div class="cell" style="left:347px;top:395px;width:101px;height:17px;border-bottom:none"></div><div class="cell" style="left:448px;top:395px;width:91px;height:17px;border-bottom:none"></div><div class="cell" style="left:539px;top:395px;width:31px;height:17px;border-bottom:none"></div><div class="cb" style="left:485px;top:398px;height:13px"></div><svg style="left:548.2px;top:399.2px" width="11" height="11" viewBox="0 0 11 11"><defs><linearGradient id="grx" x1="0" y1="0" x2="0" y2="11" gradientUnits="userSpaceOnUse"><stop offset="0" stop-color="#b81414"/><stop offset="1" stop-color="#7a0606"/></linearGradient></defs>
<path d="M1.45 1.45 L9.55 9.55 M9.55 1.45 L1.45 9.55" stroke="url(#grx)" stroke-width="3" stroke-linecap="butt"/></svg><div style="left:582px;top:214px;width:9px;height:198px;background:#f0f0f0"></div><div style="left:582px;top:223px;width:8px;height:8px;background:#c9c9c9"></div><svg style="left:582px;top:218.5px;overflow:hidden" width="8" height="5" viewBox="0 0 8 5"><path d="M3.2 4.4 L6.5 1 L9.8 4.4" stroke="#444" stroke-width="1.7" fill="none"/></svg><svg style="left:582px;top:406px;overflow:hidden" width="8" height="5" viewBox="0 0 8 5"><path d="M3.2 0.6 L6.5 4 L9.8 0.6" stroke="#444" stroke-width="1.7" fill="none"/></svg><div class="cb" style="left:244px;top:417px"></div><span class="t" style="left:260px;top:419px;font-size:11px;line-height:11px;height:11px;letter-spacing:-0.13px;">The table is a dictionary</span>
<span class="t" style="left:612.3px;top:199px;font-size:12px;line-height:12px;height:12px;letter-spacing:-0.34px;font-weight:bold;">checks</span><svg style="left:907px;top:193px" width="16" height="16" viewBox="0 0 16 16"><path d="M5 15.7 H15.4" stroke="#dcdcdc" stroke-width="0.9"/>
<g transform="rotate(45 8 8)"><rect x="-1.9" y="6" width="3.2" height="4" rx="1.1" fill="#e8604c" stroke="#c84836" stroke-width="0.4"/>
<rect x="1.2" y="5.9" width="2.6" height="4.2" fill="#666"/><rect x="2" y="5.9" width="1" height="4.2" fill="#ececec"/>
<rect x="3.8" y="5.8" width="10" height="4.4" fill="#f7dc00" stroke="#7c6416" stroke-width="0.8"/>
<path d="M3.8 9.2H13.8" stroke="#d8b400" stroke-width="1"/>
<path d="M13.8 5.7 L17.6 8 L13.8 10.3Z" fill="#f1cc92" stroke="#a8824a" stroke-width="0.5"/><path d="M16.2 7.2 L18.2 8 L16.2 8.8Z" fill="#1c1c1c" stroke="#1c1c1c" stroke-width="0.4"/></g></svg><svg style="left:930px;top:192.5px" width="17" height="16" viewBox="0 0 17 16"><defs><linearGradient id="gdb" x1="0" y1="0" x2="1" y2="0"><stop offset="0" stop-color="#aab6c0"/><stop offset="0.5" stop-color="#dfe6ec"/><stop offset="1" stop-color="#b4c0ca"/></linearGradient></defs>
<path d="M0.5 2.5 V12 Q0.5 14.3 6.8 14.3 Q13 14.3 13 12 V2.5Z" fill="url(#gdb)" stroke="#8c98a4" stroke-width="0.8"/>
<ellipse cx="6.75" cy="2.6" rx="6.25" ry="2.1" fill="#e9eef3" stroke="#98a4b0" stroke-width="0.8"/>
<path d="M0.5 7 Q6.8 9.6 13 7" stroke="#8694a2" stroke-width="0.9" fill="none"/><path d="M0.8 8 Q6.8 10.6 12.8 8" stroke="#f2f6f9" stroke-width="0.9" fill="none"/>
<circle cx="12.5" cy="11.6" r="3.6" fill="#e8402c" stroke="#c42c1c" stroke-width="0.6"/><rect x="10.4" y="10.9" width="4.2" height="1.5" fill="#fff"/></svg><div class="panel" style="left:612px;top:213px;width:348px;height:200px;"></div><div style="left:614px;top:215px;width:101px;height:20px;background:#fcfcfc;border-right:1px solid #dcdcdc;border-bottom:1px solid #dedede"></div><div style="left:715px;top:215px;width:101px;height:20px;background:#fcfcfc;border-right:1px solid #dcdcdc;border-bottom:1px solid #dedede"></div><div style="left:816px;top:215px;width:91px;height:20px;background:#fcfcfc;border-right:1px solid #dcdcdc;border-bottom:1px solid #dedede"></div><div style="left:907px;top:215px;width:31px;height:20px;background:#fcfcfc;border-right:1px solid #dcdcdc;border-bottom:1px solid #dedede"></div><span class="t" style="left:619.3px;top:220px;font-size:11px;line-height:11px;height:11px;transform:scaleX(0.930);transform-origin:0 0;">Field name</span><span class="t" style="left:720.3px;top:220px;font-size:11px;line-height:11px;height:11px;letter-spacing:-0.02px;">Field type</span><span class="t" style="left:821.3px;top:220px;font-size:11px;line-height:11px;height:11px;letter-spacing:-0.19px;">Not null</span><div class="cell" style="left:614px;top:235px;width:101px;height:20px;"></div><div class="cell" style="left:715px;top:235px;width:101px;height:20px;"></div><div class="cell" style="left:816px;top:235px;width:91px;height:20px;"></div><div class="cell" style="left:907px;top:235px;width:31px;height:20px;"></div><div style="left:614px;top:235px;width:100px;height:19px;background:#dcebfc;border:1px solid #7fb0ea"></div><span class="t" style="left:619.7px;top:240px;font-size:11px;line-height:11px;height:11px;letter-spacing:-0.03px;">dateend</span><span class="t" style="left:720.8px;top:240px;font-size:11px;line-height:11px;height:11px;transform:scaleX(0.894);transform-origin:0 0;">DATE</span><div class="cb" style="left:853px;top:238px;height:13px"></div><svg style="left:916.2px;top:239.2px" width="11" height="11" viewBox="0 0 11 11"><defs><linearGradient id="grx" x1="0" y1="0" x2="0" y2="11" gradientUnits="userSpaceOnUse"><stop offset="0" stop-color="#b81414"/><stop offset="1" stop-color="#7a0606"/></linearGradient></defs>
<path d="M1.45 1.45 L9.55 9.55 M9.55 1.45 L1.45 9.55" stroke="url(#grx)" stroke-width="3" stroke-linecap="butt"/></svg><div class="cell" style="left:614px;top:255px;width:101px;height:20px;"></div><div class="cell" style="left:715px;top:255px;width:101px;height:20px;"></div><div class="cell" style="left:816px;top:255px;width:91px;height:20px;"></div><div class="cell" style="left:907px;top:255px;width:31px;height:20px;"></div><span class="t" style="left:619.7px;top:260px;font-size:11px;line-height:11px;height:11px;letter-spacing:-0.42px;">semestr</span><span class="t" style="left:720.8px;top:260px;font-size:11px;line-height:11px;height:11px;transform:scaleX(0.807);transform-origin:0 0;">TEXT</span><div class="cb" style="left:853px;top:258px;height:13px"></div><svg style="left:916.2px;top:259.2px" width="11" height="11" viewBox="0 0 11 11"><defs><linearGradient id="grx" x1="0" y1="0" x2="0" y2="11" gradientUnits="userSpaceOnUse"><stop offset="0" stop-color="#b81414"/><stop offset="1" stop-color="#7a0606"/></linearGradient></defs>
<path d="M1.45 1.45 L9.55 9.55 M9.55 1.45 L1.45 9.55" stroke="url(#grx)" stroke-width="3" stroke-linecap="butt"/></svg><div class="cell" style="left:614px;top:275px;width:101px;height:20px;"></div><div class="cell" style="left:715px;top:275px;width:101px;height:20px;"></div><div class="cell" style="left:816px;top:275px;width:91px;height:20px;"></div><div class="cell" style="left:907px;top:275px;width:31px;height:20px;"></div><span class="t" style="left:619.7px;top:280px;font-size:11px;line-height:11px;height:11px;letter-spacing:-0.04px;">(id_student)</span><span class="t" style="left:721.4px;top:280px;font-size:11px;line-height:11px;height:11px;letter-spacing:0.15px;">[student] ^</span><div class="cb" style="left:853px;top:278px;height:13px"></div><svg style="left:855px;top:280px" width="9" height="9" viewBox="0 0 9 9"><path d="M1.2 4.4 L3.4 7 L7.8 1.4" stroke="#111" stroke-width="1.7" fill="none"/></svg><svg style="left:916.2px;top:279.2px" width="11" height="11" viewBox="0 0 11 11"><defs><linearGradient id="grx" x1="0" y1="0" x2="0" y2="11" gradientUnits="userSpaceOnUse"><stop offset="0" stop-color="#b81414"/><stop offset="1" stop-color="#7a0606"/></linearGradient></defs>
<path d="M1.45 1.45 L9.55 9.55 M9.55 1.45 L1.45 9.55" stroke="url(#grx)" stroke-width="3" stroke-linecap="butt"/></svg><div class="cell" style="left:614px;top:295px;width:101px;height:20px;"></div><div class="cell" style="left:715px;top:295px;width:101px;height:20px;"></div><div class="cell" style="left:816px;top:295px;width:91px;height:20px;"></div><div class="cell" style="left:907px;top:295px;width:31px;height:20px;"></div><span class="t" style="left:619.7px;top:300px;font-size:11px;line-height:11px;height:11px;letter-spacing:0.01px;">subject</span><span class="t" style="left:720.8px;top:300px;font-size:11px;line-height:11px;height:11px;transform:scaleX(0.807);transform-origin:0 0;">TEXT</span><div class="cb" style="left:853px;top:298px;height:13px"></div><svg style="left:916.2px;top:299.2px" width="11" height="11" viewBox="0 0 11 11"><defs><linearGradient id="grx" x1="0" y1="0" x2="0" y2="11" gradientUnits="userSpaceOnUse"><stop offset="0" stop-color="#b81414"/><stop offset="1" stop-color="#7a0606"/></linearGradient></defs>
<path d="M1.45 1.45 L9.55 9.55 M9.55 1.45 L1.45 9.55" stroke="url(#grx)" stroke-width="3" stroke-linecap="butt"/></svg><div class="cell" style="left:614px;top:315px;width:101px;height:20px;"></div><div class="cell" style="left:715px;top:315px;width:101px;height:20px;"></div><div class="cell" style="left:816px;top:315px;width:91px;height:20px;"></div><div class="cell" style="left:907px;top:315px;width:31px;height:20px;"></div><div class="cb" style="left:853px;top:318px;height:13px"></div><svg style="left:916.2px;top:319.2px" width="11" height="11" viewBox="0 0 11 11"><defs><linearGradient id="grx" x1="0" y1="0" x2="0" y2="11" gradientUnits="userSpaceOnUse"><stop offset="0" stop-color="#b81414"/><stop offset="1" stop-color="#7a0606"/></linearGradient></defs>
<path d="M1.45 1.45 L9.55 9.55 M9.55 1.45 L1.45 9.55" stroke="url(#grx)" stroke-width="3" stroke-linecap="butt"/></svg><div class="cb" style="left:612px;top:417px"></div><span class="t" style="left:628px;top:419px;font-size:11px;line-height:11px;height:11px;letter-spacing:-0.13px;">The table is a dictionary</span>
<span class="t" style="left:244.3px;top:452px;font-size:12px;line-height:12px;height:12px;letter-spacing:0.20px;font-weight:bold;">exam</span><svg style="left:539px;top:446px" width="16" height="16" viewBox="0 0 16 16"><path d="M5 15.7 H15.4" stroke="#dcdcdc" stroke-width="0.9"/>
<g transform="rotate(45 8 8)"><rect x="-1.9" y="6" width="3.2" height="4" rx="1.1" fill="#e8604c" stroke="#c84836" stroke-width="0.4"/>
<rect x="1.2" y="5.9" width="2.6" height="4.2" fill="#666"/><rect x="2" y="5.9" width="1" height="4.2" fill="#ececec"/>
<rect x="3.8" y="5.8" width="10" height="4.4" fill="#f7dc00" stroke="#7c6416" stroke-width="0.8"/>
<path d="M3.8 9.2H13.8" stroke="#d8b400" stroke-width="1"/>
<path d="M13.8 5.7 L17.6 8 L13.8 10.3Z" fill="#f1cc92" stroke="#a8824a" stroke-width="0.5"/><path d="M16.2 7.2 L18.2 8 L16.2 8.8Z" fill="#1c1c1c" stroke="#1c1c1c" stroke-width="0.4"/></g></svg><svg style="left:562px;top:445.5px" width="17" height="16" viewBox="0 0 17 16"><defs><linearGradient id="gdb" x1="0" y1="0" x2="1" y2="0"><stop offset="0" stop-color="#aab6c0"/><stop offset="0.5" stop-color="#dfe6ec"/><stop offset="1" stop-color="#b4c0ca"/></linearGradient></defs>
<path d="M0.5 2.5 V12 Q0.5 14.3 6.8 14.3 Q13 14.3 13 12 V2.5Z" fill="url(#gdb)" stroke="#8c98a4" stroke-width="0.8"/>
<ellipse cx="6.75" cy="2.6" rx="6.25" ry="2.1" fill="#e9eef3" stroke="#98a4b0" stroke-width="0.8"/>
<path d="M0.5 7 Q6.8 9.6 13 7" stroke="#8694a2" stroke-width="0.9" fill="none"/><path d="M0.8 8 Q6.8 10.6 12.8 8" stroke="#f2f6f9" stroke-width="0.9" fill="none"/>
<circle cx="12.5" cy="11.6" r="3.6" fill="#e8402c" stroke="#c42c1c" stroke-width="0.6"/><rect x="10.4" y="10.9" width="4.2" height="1.5" fill="#fff"/></svg><div class="panel" style="left:244px;top:466px;width:348px;height:158px;border-bottom:none"></div><div style="left:246px;top:468px;width:101px;height:20px;background:#fcfcfc;border-right:1px solid #dcdcdc;border-bottom:1px solid #dedede"></div><div style="left:347px;top:468px;width:101px;height:20px;background:#fcfcfc;border-right:1px solid #dcdcdc;border-bottom:1px solid #dedede"></div><div style="left:448px;top:468px;width:91px;height:20px;background:#fcfcfc;border-right:1px solid #dcdcdc;border-bottom:1px solid #dedede"></div><div style="left:539px;top:468px;width:31px;height:20px;background:#fcfcfc;border-right:1px solid #dcdcdc;border-bottom:1px solid #dedede"></div><span class="t" style="left:251.3px;top:473px;font-size:11px;line-height:11px;height:11px;transform:scaleX(0.930);transform-origin:0 0;">Field name</span><span class="t" style="left:352.3px;top:473px;font-size:11px;line-height:11px;height:11px;letter-spacing:-0.02px;">Field type</span><span class="t" style="left:453.3px;top:473px;font-size:11px;line-height:11px;height:11px;letter-spacing:-0.19px;">Not null</span><div class="cell" style="left:246px;top:488px;width:101px;height:20px;"></div><div class="cell" style="left:347px;top:488px;width:101px;height:20px;"></div><div class="cell" style="left:448px;top:488px;width:91px;height:20px;"></div><div class="cell" style="left:539px;top:488px;width:31px;height:20px;"></div><div style="left:246px;top:488px;width:100px;height:19px;background:#dcebfc;border:1px solid #7fb0ea"></div><span class="t" style="left:251.7px;top:493px;font-size:11px;line-height:11px;height:11px;letter-spacing:-0.03px;">dateend</span><span class="t" style="left:352.8px;top:493px;font-size:11px;line-height:11px;height:11px;transform:scaleX(0.894);transform-origin:0 0;">DATE</span><div class="cb" style="left:485px;top:491px;height:13px"></div><svg style="left:548.2px;top:492.2px" width="11" height="11" viewBox="0 0 11 11"><defs><linearGradient id="grx" x1="0" y1="0" x2="0" y2="11" gradientUnits="userSpaceOnUse"><stop offset="0" stop-color="#b81414"/><stop offset="1" stop-color="#7a0606"/></linearGradient></defs>
<path d="M1.45 1.45 L9.55 9.55 M9.55 1.45 L1.45 9.55" stroke="url(#grx)" stroke-width="3" stroke-linecap="butt"/></svg><div class="cell" style="left:246px;top:508px;width:101px;height:20px;"></div><div class="cell" style="left:347px;top:508px;width:101px;height:20px;"></div><div class="cell" style="left:448px;top:508px;width:91px;height:20px;"></div><div class="cell" style="left:539px;top:508px;width:31px;height:20px;"></div><span class="t" style="left:251.7px;top:513px;font-size:11px;line-height:11px;height:11px;letter-spacing:-0.15px;">(id_prohod)</span><span class="t" style="left:353.40000000000003px;top:513px;font-size:11px;line-height:11px;height:11px;letter-spacing:-0.04px;">[prohod]</span><div class="cb" style="left:485px;top:511px;height:13px"></div><svg style="left:548.2px;top:512.2px" width="11" height="11" viewBox="0 0 11 11"><defs><linearGradient id="grx" x1="0" y1="0" x2="0" y2="11" gradientUnits="userSpaceOnUse"><stop offset="0" stop-color="#b81414"/><stop offset="1" stop-color="#7a0606"/></linearGradient></defs>
<path d="M1.45 1.45 L9.55 9.55 M9.55 1.45 L1.45 9.55" stroke="url(#grx)" stroke-width="3" stroke-linecap="butt"/></svg><div class="cell" style="left:246px;top:528px;width:101px;height:20px;"></div><div class="cell" style="left:347px;top:528px;width:101px;height:20px;"></div><div class="cell" style="left:448px;top:528px;width:91px;height:20px;"></div><div class="cell" style="left:539px;top:528px;width:31px;height:20px;"></div><span class="t" style="left:251.7px;top:533px;font-size:11px;line-height:11px;height:11px;letter-spacing:-0.42px;">semestr</span><span class="t" style="left:352.8px;top:533px;font-size:11px;line-height:11px;height:11px;transform:scaleX(0.807);transform-origin:0 0;">TEXT</span><div class="cb" style="left:485px;top:531px;height:13px"></div><svg style="left:548.2px;top:532.2px" width="11" height="11" viewBox="0 0 11 11"><defs><linearGradient id="grx" x1="0" y1="0" x2="0" y2="11" gradientUnits="userSpaceOnUse"><stop offset="0" stop-color="#b81414"/><stop offset="1" stop-color="#7a0606"/></linearGradient></defs>
<path d="M1.45 1.45 L9.55 9.55 M9.55 1.45 L1.45 9.55" stroke="url(#grx)" stroke-width="3" stroke-linecap="butt"/></svg><div class="cell" style="left:246px;top:548px;width:101px;height:20px;"></div><div class="cell" style="left:347px;top:548px;width:101px;height:20px;"></div><div class="cell" style="left:448px;top:548px;width:91px;height:20px;"></div><div class="cell" style="left:539px;top:548px;width:31px;height:20px;"></div><span class="t" style="left:251.7px;top:553px;font-size:11px;line-height:11px;height:11px;letter-spacing:-0.03px;">rating</span><span class="t" style="left:352.8px;top:553px;font-size:11px;line-height:11px;height:11px;transform:scaleX(0.807);transform-origin:0 0;">TEXT</span><div class="cb" style="left:485px;top:551px;height:13px"></div><svg style="left:548.2px;top:552.2px" width="11" height="11" viewBox="0 0 11 11"><defs><linearGradient id="grx" x1="0" y1="0" x2="0" y2="11" gradientUnits="userSpaceOnUse"><stop offset="0" stop-color="#b81414"/><stop offset="1" stop-color="#7a0606"/></linearGradient></defs>
<path d="M1.45 1.45 L9.55 9.55 M9.55 1.45 L1.45 9.55" stroke="url(#grx)" stroke-width="3" stroke-linecap="butt"/></svg><div class="cell" style="left:246px;top:568px;width:101px;height:20px;"></div><div class="cell" style="left:347px;top:568px;width:101px;height:20px;"></div><div class="cell" style="left:448px;top:568px;width:91px;height:20px;"></div><div class="cell" style="left:539px;top:568px;width:31px;height:20px;"></div><span class="t" style="left:251.7px;top:573px;font-size:11px;line-height:11px;height:11px;letter-spacing:-0.04px;">(id_student)</span><span class="t" style="left:353.40000000000003px;top:573px;font-size:11px;line-height:11px;height:11px;letter-spacing:0.15px;">[student] ^</span><div class="cb" style="left:485px;top:571px;height:13px"></div><svg style="left:487px;top:573px" width="9" height="9" viewBox="0 0 9 9"><path d="M1.2 4.4 L3.4 7 L7.8 1.4" stroke="#111" stroke-width="1.7" fill="none"/></svg><svg style="left:548.2px;top:572.2px" width="11" height="11" viewBox="0 0 11 11"><defs><linearGradient id="grx" x1="0" y1="0" x2="0" y2="11" gradientUnits="userSpaceOnUse"><stop offset="0" stop-color="#b81414"/><stop offset="1" stop-color="#7a0606"/></linearGradient></defs>
<path d="M1.45 1.45 L9.55 9.55 M9.55 1.45 L1.45 9.55" stroke="url(#grx)" stroke-width="3" stroke-linecap="butt"/></svg><div class="cell" style="left:246px;top:588px;width:101px;height:20px;"></div><div class="cell" style="left:347px;top:588px;width:101px;height:20px;"></div><div class="cell" style="left:448px;top:588px;width:91px;height:20px;"></div><div class="cell" style="left:539px;top:588px;width:31px;height:20px;"></div><span class="t" style="left:251.7px;top:593px;font-size:11px;line-height:11px;height:11px;letter-spacing:0.01px;">subject</span><span class="t" style="left:352.8px;top:593px;font-size:11px;line-height:11px;height:11px;transform:scaleX(0.807);transform-origin:0 0;">TEXT</span><div class="cb" style="left:485px;top:591px;height:13px"></div><svg style="left:548.2px;top:592.2px" width="11" height="11" viewBox="0 0 11 11"><defs><linearGradient id="grx" x1="0" y1="0" x2="0" y2="11" gradientUnits="userSpaceOnUse"><stop offset="0" stop-color="#b81414"/><stop offset="1" stop-color="#7a0606"/></linearGradient></defs>
<path d="M1.45 1.45 L9.55 9.55 M9.55 1.45 L1.45 9.55" stroke="url(#grx)" stroke-width="3" stroke-linecap="butt"/></svg><div class="cell" style="left:246px;top:608px;width:101px;height:16px;border-bottom:none"></div><div class="cell" style="left:347px;top:608px;width:101px;height:16px;border-bottom:none"></div><div class="cell" style="left:448px;top:608px;width:91px;height:16px;border-bottom:none"></div><div class="cell" style="left:539px;top:608px;width:31px;height:16px;border-bottom:none"></div><div class="cb" style="left:485px;top:611px;height:13px"></div><svg style="left:548.2px;top:612.2px" width="11" height="11" viewBox="0 0 11 11"><defs><linearGradient id="grx" x1="0" y1="0" x2="0" y2="11" gradientUnits="userSpaceOnUse"><stop offset="0" stop-color="#b81414"/><stop offset="1" stop-color="#7a0606"/></linearGradient></defs>
<path d="M1.45 1.45 L9.55 9.55 M9.55 1.45 L1.45 9.55" stroke="url(#grx)" stroke-width="3" stroke-linecap="butt"/></svg>
<span class="t" style="left:612.3px;top:452px;font-size:12px;line-height:12px;height:12px;letter-spacing:0.12px;font-weight:bold;">debt</span><svg style="left:907px;top:446px" width="16" height="16" viewBox="0 0 16 16"><path d="M5 15.7 H15.4" stroke="#dcdcdc" stroke-width="0.9"/>
<g transform="rotate(45 8 8)"><rect x="-1.9" y="6" width="3.2" height="4" rx="1.1" fill="#e8604c" stroke="#c84836" stroke-width="0.4"/>
<rect x="1.2" y="5.9" width="2.6" height="4.2" fill="#666"/><rect x="2" y="5.9" width="1" height="4.2" fill="#ececec"/>
<rect x="3.8" y="5.8" width="10" height="4.4" fill="#f7dc00" stroke="#7c6416" stroke-width="0.8"/>
<path d="M3.8 9.2H13.8" stroke="#d8b400" stroke-width="1"/>
<path d="M13.8 5.7 L17.6 8 L13.8 10.3Z" fill="#f1cc92" stroke="#a8824a" stroke-width="0.5"/><path d="M16.2 7.2 L18.2 8 L16.2 8.8Z" fill="#1c1c1c" stroke="#1c1c1c" stroke-width="0.4"/></g></svg><svg style="left:930px;top:445.5px" width="17" height="16" viewBox="0 0 17 16"><defs><linearGradient id="gdb" x1="0" y1="0" x2="1" y2="0"><stop offset="0" stop-color="#aab6c0"/><stop offset="0.5" stop-color="#dfe6ec"/><stop offset="1" stop-color="#b4c0ca"/></linearGradient></defs>
<path d="M0.5 2.5 V12 Q0.5 14.3 6.8 14.3 Q13 14.3 13 12 V2.5Z" fill="url(#gdb)" stroke="#8c98a4" stroke-width="0.8"/>
<ellipse cx="6.75" cy="2.6" rx="6.25" ry="2.1" fill="#e9eef3" stroke="#98a4b0" stroke-width="0.8"/>
<path d="M0.5 7 Q6.8 9.6 13 7" stroke="#8694a2" stroke-width="0.9" fill="none"/><path d="M0.8 8 Q6.8 10.6 12.8 8" stroke="#f2f6f9" stroke-width="0.9" fill="none"/>
<circle cx="12.5" cy="11.6" r="3.6" fill="#e8402c" stroke="#c42c1c" stroke-width="0.6"/><rect x="10.4" y="10.9" width="4.2" height="1.5" fill="#fff"/></svg><div class="panel" style="left:612px;top:466px;width:348px;height:158px;border-bottom:none"></div><div style="left:614px;top:468px;width:101px;height:20px;background:#fcfcfc;border-right:1px solid #dcdcdc;border-bottom:1px solid #dedede"></div><div style="left:715px;top:468px;width:101px;height:20px;background:#fcfcfc;border-right:1px solid #dcdcdc;border-bottom:1px solid #dedede"></div><div style="left:816px;top:468px;width:91px;height:20px;background:#fcfcfc;border-right:1px solid #dcdcdc;border-bottom:1px solid #dedede"></div><div style="left:907px;top:468px;width:31px;height:20px;background:#fcfcfc;border-right:1px solid #dcdcdc;border-bottom:1px solid #dedede"></div><span class="t" style="left:619.3px;top:473px;font-size:11px;line-height:11px;height:11px;transform:scaleX(0.930);transform-origin:0 0;">Field name</span><span class="t" style="left:720.3px;top:473px;font-size:11px;line-height:11px;height:11px;letter-spacing:-0.02px;">Field type</span><span class="t" style="left:821.3px;top:473px;font-size:11px;line-height:11px;height:11px;letter-spacing:-0.19px;">Not null</span><div class="cell" style="left:614px;top:488px;width:101px;height:20px;"></div><div class="cell" style="left:715px;top:488px;width:101px;height:20px;"></div><div class="cell" style="left:816px;top:488px;width:91px;height:20px;"></div><div class="cell" style="left:907px;top:488px;width:31px;height:20px;"></div><div style="left:614px;top:488px;width:100px;height:19px;background:#dcebfc;border:1px solid #7fb0ea"></div><span class="t" style="left:619.7px;top:493px;font-size:11px;line-height:11px;height:11px;letter-spacing:-0.42px;">semestr</span><span class="t" style="left:720.8px;top:493px;font-size:11px;line-height:11px;height:11px;transform:scaleX(0.807);transform-origin:0 0;">TEXT</span><div class="cb" style="left:853px;top:491px;height:13px"></div><svg style="left:916.2px;top:492.2px" width="11" height="11" viewBox="0 0 11 11"><defs><linearGradient id="grx" x1="0" y1="0" x2="0" y2="11" gradientUnits="userSpaceOnUse"><stop offset="0" stop-color="#b81414"/><stop offset="1" stop-color="#7a0606"/></linearGradient></defs>
<path d="M1.45 1.45 L9.55 9.55 M9.55 1.45 L1.45 9.55" stroke="url(#grx)" stroke-width="3" stroke-linecap="butt"/></svg><div class="cell" style="left:614px;top:508px;width:101px;height:20px;"></div><div class="cell" style="left:715px;top:508px;width:101px;height:20px;"></div><div class="cell" style="left:816px;top:508px;width:91px;height:20px;"></div><div class="cell" style="left:907px;top:508px;width:31px;height:20px;"></div><span class="t" style="left:619.7px;top:513px;font-size:11px;line-height:11px;height:11px;letter-spacing:-0.04px;">(id_student)</span><span class="t" style="left:721.4px;top:513px;font-size:11px;line-height:11px;height:11px;letter-spacing:0.15px;">[student] ^</span><div class="cb" style="left:853px;top:511px;height:13px"></div><svg style="left:855px;top:513px" width="9" height="9" viewBox="0 0 9 9"><path d="M1.2 4.4 L3.4 7 L7.8 1.4" stroke="#111" stroke-width="1.7" fill="none"/></svg><svg style="left:916.2px;top:512.2px" width="11" height="11" viewBox="0 0 11 11"><defs><linearGradient id="grx" x1="0" y1="0" x2="0" y2="11" gradientUnits="userSpaceOnUse"><stop offset="0" stop-color="#b81414"/><stop offset="1" stop-color="#7a0606"/></linearGradient></defs>
<path d="M1.45 1.45 L9.55 9.55 M9.55 1.45 L1.45 9.55" stroke="url(#grx)" stroke-width="3" stroke-linecap="butt"/></svg><div class="cell" style="left:614px;top:528px;width:101px;height:20px;"></div><div class="cell" style="left:715px;top:528px;width:101px;height:20px;"></div><div class="cell" style="left:816px;top:528px;width:91px;height:20px;"></div><div class="cell" style="left:907px;top:528px;width:31px;height:20px;"></div><span class="t" style="left:619.7px;top:533px;font-size:11px;line-height:11px;height:11px;letter-spacing:0.01px;">subject</span><span class="t" style="left:720.8px;top:533px;font-size:11px;line-height:11px;height:11px;transform:scaleX(0.807);transform-origin:0 0;">TEXT</span><div class="cb" style="left:853px;top:531px;height:13px"></div><svg style="left:916.2px;top:532.2px" width="11" height="11" viewBox="0 0 11 11"><defs><linearGradient id="grx" x1="0" y1="0" x2="0" y2="11" gradientUnits="userSpaceOnUse"><stop offset="0" stop-color="#b81414"/><stop offset="1" stop-color="#7a0606"/></linearGradient></defs>
<path d="M1.45 1.45 L9.55 9.55 M9.55 1.45 L1.45 9.55" stroke="url(#grx)" stroke-width="3" stroke-linecap="butt"/></svg><div class="cell" style="left:614px;top:548px;width:101px;height:20px;"></div><div class="cell" style="left:715px;top:548px;width:101px;height:20px;"></div><div class="cell" style="left:816px;top:548px;width:91px;height:20px;"></div><div class="cell" style="left:907px;top:548px;width:31px;height:20px;"></div><div class="cb" style="left:853px;top:551px;height:13px"></div><svg style="left:916.2px;top:552.2px" width="11" height="11" viewBox="0 0 11 11"><defs><linearGradient id="grx" x1="0" y1="0" x2="0" y2="11" gradientUnits="userSpaceOnUse"><stop offset="0" stop-color="#b81414"/><stop offset="1" stop-color="#7a0606"/></linearGradient></defs>
<path d="M1.45 1.45 L9.55 9.55 M9.55 1.45 L1.45 9.55" stroke="url(#grx)" stroke-width="3" stroke-linecap="butt"/></svg>
<span class="t" style="left:238.5px;top:490px;font-size:20px;line-height:20px;height:20px;letter-spacing:0.08px;color:rgba(255,255,255,0.62);z-index:0;font-weight:bold;-webkit-text-stroke:0;text-shadow:1px 1px 0.5px rgba(120,130,145,0.26),-0.5px -0.5px 0.5px rgba(150,160,170,0.10);transform:scaleY(1.06);transform-origin:0 100%;">SOFTPEDIA</span>
<span class="t" style="left:258.8px;top:518px;font-size:11px;line-height:11px;height:11px;transform:scaleX(0.865);transform-origin:0 0;color:rgba(255,255,255,0.6);z-index:0;-webkit-text-stroke:0;text-shadow:1px 1px 0.5px rgba(120,130,145,0.30);">www.softpedia.com</span>
</body>
</html>
